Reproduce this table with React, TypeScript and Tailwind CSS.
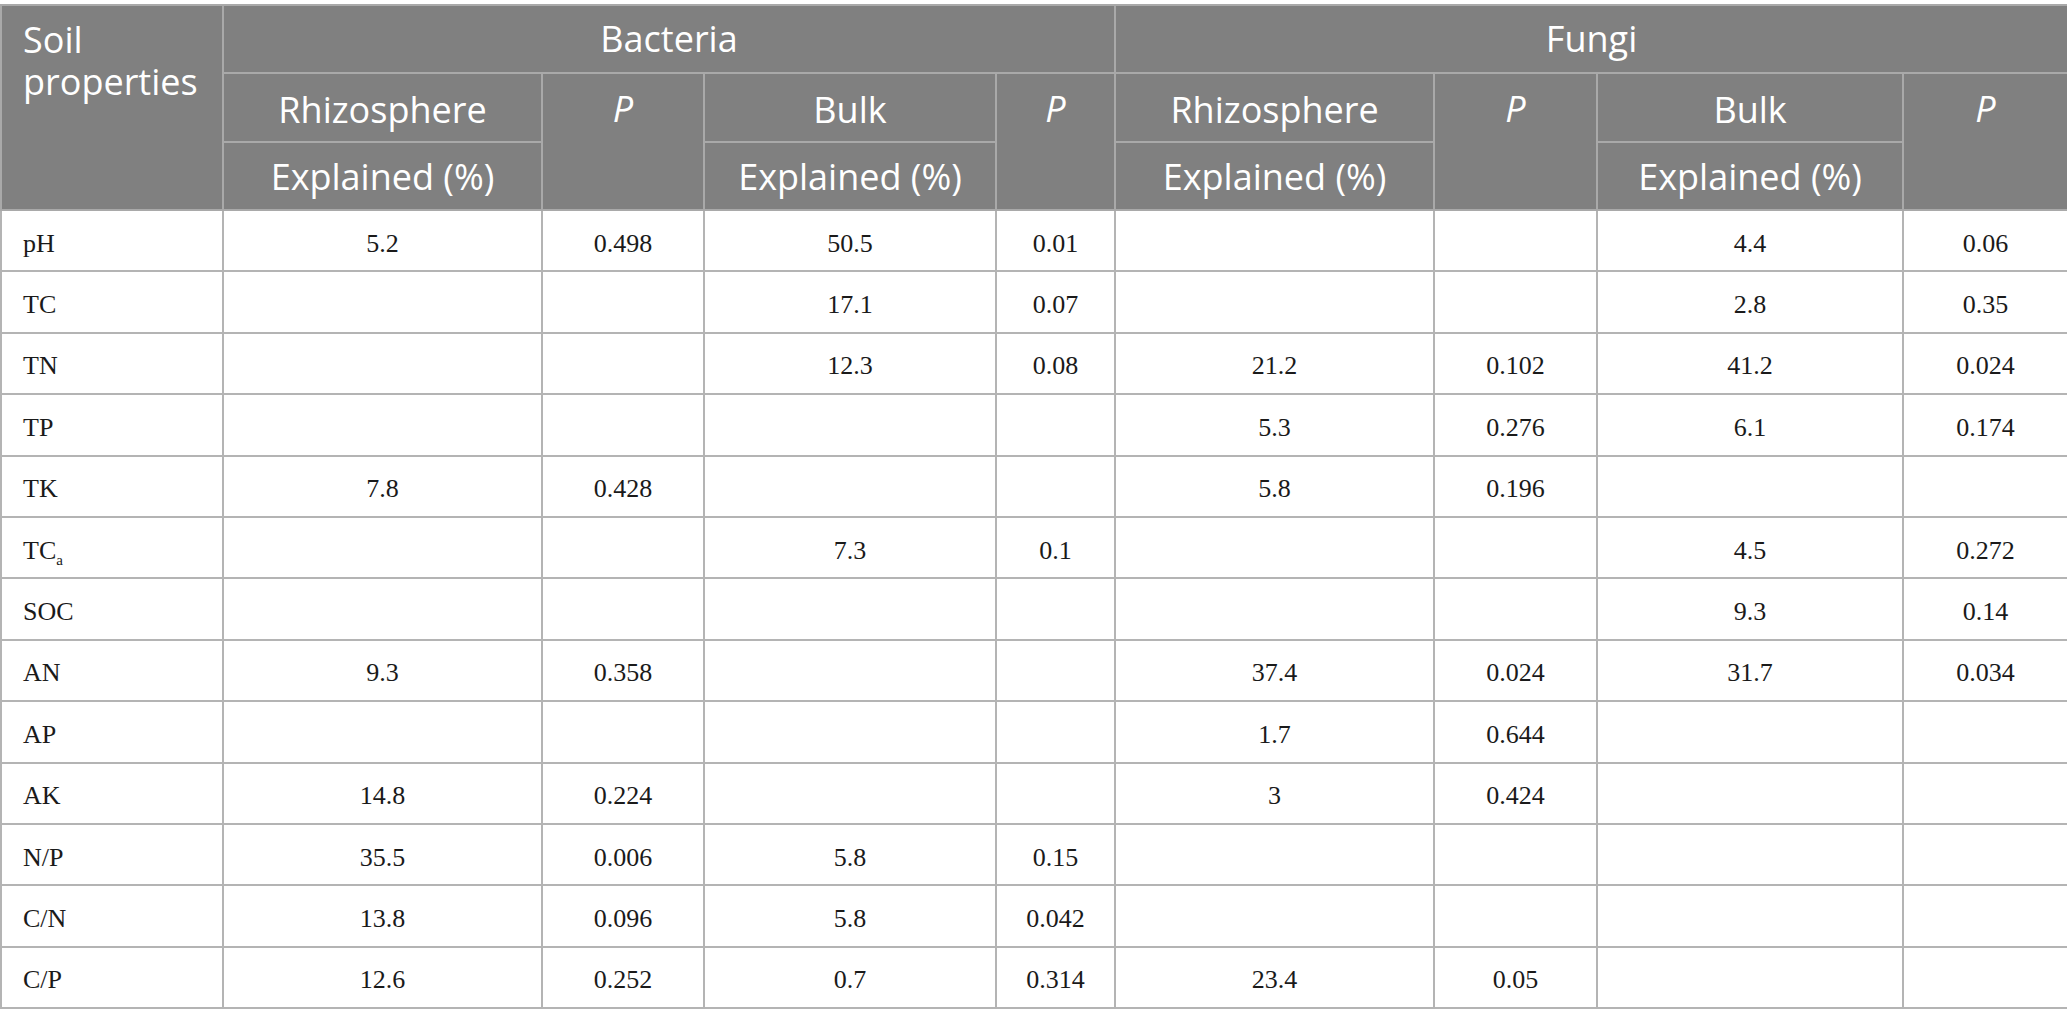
import React from "react";

type Row = { label: React.ReactNode; v: string[] };

const rows: Row[] = [
  { label: "pH", v: ["5.2", "0.498", "50.5", "0.01", "", "", "4.4", "0.06"] },
  { label: "TC", v: ["", "", "17.1", "0.07", "", "", "2.8", "0.35"] },
  { label: "TN", v: ["", "", "12.3", "0.08", "21.2", "0.102", "41.2", "0.024"] },
  { label: "TP", v: ["", "", "", "", "5.3", "0.276", "6.1", "0.174"] },
  { label: "TK", v: ["7.8", "0.428", "", "", "5.8", "0.196", "", ""] },
  {
    label: (
      <>
        TC<sub className="text-[15px] align-[-3px]">a</sub>
      </>
    ),
    v: ["", "", "7.3", "0.1", "", "", "4.5", "0.272"],
  },
  { label: "SOC", v: ["", "", "", "", "", "", "9.3", "0.14"] },
  { label: "AN", v: ["9.3", "0.358", "", "", "37.4", "0.024", "31.7", "0.034"] },
  { label: "AP", v: ["", "", "", "", "1.7", "0.644", "", ""] },
  { label: "AK", v: ["14.8", "0.224", "", "", "3", "0.424", "", ""] },
  { label: "N/P", v: ["35.5", "0.006", "5.8", "0.15", "", "", "", ""] },
  { label: "C/N", v: ["13.8", "0.096", "5.8", "0.042", "", "", "", ""] },
  { label: "C/P", v: ["12.6", "0.252", "0.7", "0.314", "23.4", "0.05", "", ""] },
];

const hc =
  "border-2 border-[#a9a9a9] bg-[#808080] text-white font-normal text-[36px] leading-[40px]";
const dc =
  "border-2 border-[#b4b4b4] text-[26px] leading-[30px] text-[#1a1a1a] align-middle pt-[6px]";

export default function App() {
  return (
    <div
      className="w-[2067px] h-[1026px] bg-white pt-[4px] overflow-hidden"
      style={{ fontFamily: '"Open Sans", "Liberation Sans", sans-serif' }}
    >
      <table className="table-fixed border-collapse w-[2067px]">
        <colgroup>
          <col className="w-[222px]" />
          <col className="w-[319px]" />
          <col className="w-[162px]" />
          <col className="w-[292px]" />
          <col className="w-[119px]" />
          <col className="w-[319px]" />
          <col className="w-[163px]" />
          <col className="w-[306px]" />
          <col className="w-[165px]" />
        </colgroup>
        <thead>
          <tr className="h-[68px]">
            <th
              rowSpan={3}
              className={`${hc} text-left align-top pl-[21px] pt-[13px] leading-[42px]`}
            >
              <div>Soil</div>
              <div>properties</div>
            </th>
            <th colSpan={4} className={`${hc} text-center align-middle`}>
              Bacteria
            </th>
            <th colSpan={4} className={`${hc} text-center align-middle`}>
              Fungi
            </th>
          </tr>
          <tr className="h-[69px]">
            <th className={`${hc} text-center align-middle pt-[4px]`}>Rhizosphere</th>
            <th rowSpan={2} className={`${hc} text-center align-top pt-[15px] italic`}>
              P
            </th>
            <th className={`${hc} text-center align-middle pt-[4px]`}>Bulk</th>
            <th rowSpan={2} className={`${hc} text-center align-top pt-[15px] italic`}>
              P
            </th>
            <th className={`${hc} text-center align-middle pt-[4px]`}>Rhizosphere</th>
            <th rowSpan={2} className={`${hc} text-center align-top pt-[15px] italic`}>
              P
            </th>
            <th className={`${hc} text-center align-middle pt-[4px]`}>Bulk</th>
            <th rowSpan={2} className={`${hc} text-center align-top pt-[15px] italic`}>
              P
            </th>
          </tr>
          <tr className="h-[68px]">
            <th className={`${hc} text-center align-middle pt-[2px]`}>Explained (%)</th>
            <th className={`${hc} text-center align-middle pt-[2px]`}>Explained (%)</th>
            <th className={`${hc} text-center align-middle pt-[2px]`}>Explained (%)</th>
            <th className={`${hc} text-center align-middle pt-[2px]`}>Explained (%)</th>
          </tr>
        </thead>
        <tbody style={{ fontFamily: '"Liberation Serif", "Times New Roman", serif' }}>
          {rows.map((r, i) => (
            <tr key={i} className="h-[61.4px]">
              <td className={`${dc} text-left pl-[21px]`}>{r.label}</td>
              {r.v.map((v, j) => (
                <td key={j} className={`${dc} text-center`}>
                  {v}
                </td>
              ))}
            </tr>
          ))}
        </tbody>
      </table>
    </div>
  );
}
